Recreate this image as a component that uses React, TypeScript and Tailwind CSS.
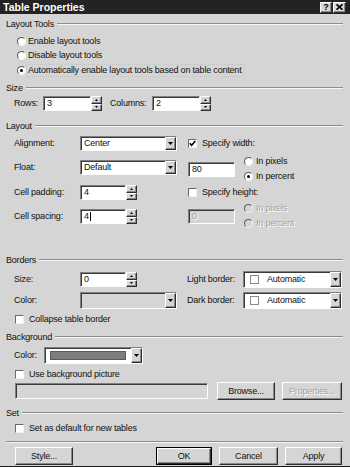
import React from "react";

const sunken =
  "border border-t-[#808080] border-l-[#808080] border-r-white border-b-white shadow-[inset_1px_1px_0_#3a3a3a]";
const raised =
  "border border-t-white border-l-white border-r-[#2e2e2e] border-b-[#2e2e2e] shadow-[inset_-1px_-1px_0_#8a8a8a]";
const dis = "text-[#a2a2a2] [text-shadow:1px_1px_0_#ffffff]";

function Header({ label, className = "" }: { label: string; className?: string }) {
  return (
    <div className={`flex items-center h-[12px] ${className}`}>
      <span className="leading-none">{label}</span>
      <div className="flex-1 ml-[3px] h-[2px] border-t border-t-[#8c8c8c] border-b border-b-[#f6f6f6]" />
    </div>
  );
}

function Radio({ checked = false, disabled = false }: { checked?: boolean; disabled?: boolean }) {
  return (
    <span
      className={`w-[9px] h-[9px] rounded-full border border-t-[#5a5a5a] border-l-[#5a5a5a] border-r-[#f2f2f2] border-b-[#f2f2f2] ${
        disabled ? "bg-[#d5d5d5]" : "bg-white"
      } flex items-center justify-center shrink-0`}
    >
      {checked && <span className="w-[3px] h-[3px] rounded-full bg-black" />}
    </span>
  );
}

function Check({ checked = false }: { checked?: boolean }) {
  return (
    <span className="w-[9px] h-[9px] bg-white border border-t-[#6a6a6a] border-l-[#6a6a6a] border-r-[#f2f2f2] border-b-[#f2f2f2] flex items-center justify-center shrink-0">
      {checked && (
        <svg width="7" height="7" viewBox="0 0 7 7">
          <path d="M0.8 3.2 L2.6 5.2 L6.3 1" stroke="#000" strokeWidth="1.6" fill="none" />
        </svg>
      )}
    </span>
  );
}

function Field({
  value,
  w,
  h = "h-[15px]",
  disabled = false,
  caret = false,
}: {
  value: string;
  w: string;
  h?: string;
  disabled?: boolean;
  caret?: boolean;
}) {
  return (
    <div
      className={`${h} ${w} ${sunken} ${disabled ? "bg-[#d5d5d5]" : "bg-white"} flex items-center pl-[3px] shrink-0`}
    >
      <span className={`leading-none ${disabled ? dis : ""}`}>{value}</span>
      {caret && <span className="w-[1px] h-[9px] bg-black ml-[1px]" />}
    </div>
  );
}

function Tri() {
  return (
    <svg width="5" height="3" viewBox="0 0 5 3">
      <path d="M0 0 L5 0 L2.5 3 Z" fill="#000" />
    </svg>
  );
}

function Spin() {
  return (
    <div className="flex flex-col w-[11px] h-[15px] shrink-0">
      <div className={`flex-1 bg-[#d5d5d5] ${raised} flex items-center justify-center`}>
        <svg width="3" height="2" viewBox="0 0 3 2">
          <path d="M1.5 0 L3 2 L0 2 Z" fill="#000" />
        </svg>
      </div>
      <div className={`flex-1 bg-[#d5d5d5] ${raised} flex items-center justify-center`}>
        <svg width="3" height="2" viewBox="0 0 3 2">
          <path d="M0 0 L3 0 L1.5 2 Z" fill="#000" />
        </svg>
      </div>
    </div>
  );
}

function Select({
  children,
  w,
  h = "h-[15px]",
  disabled = false,
}: {
  children?: React.ReactNode;
  w: string;
  h?: string;
  disabled?: boolean;
}) {
  return (
    <div className={`${h} ${w} ${sunken} ${disabled ? "bg-[#d5d5d5]" : "bg-white"} flex items-stretch shrink-0`}>
      <div className="flex-1 flex items-center pl-[3px] min-w-0">{children}</div>
      <div className={`w-[11px] bg-[#d5d5d5] ${raised} flex items-center justify-center`}>
        <Tri />
      </div>
    </div>
  );
}

function Btn({
  label,
  w = "w-[57px]",
  disabled = false,
  def = false,
}: {
  label: string;
  w?: string;
  disabled?: boolean;
  def?: boolean;
}) {
  const inner = (
    <div className={`h-full w-full bg-[#d5d5d5] ${raised} flex items-center justify-center`}>
      <span className={`leading-none ${disabled ? dis : ""}`}>{label}</span>
    </div>
  );
  if (def) return <div className={`h-[18px] ${w} border border-black shrink-0`}>{inner}</div>;
  return <div className={`h-[18px] ${w} shrink-0`}>{inner}</div>;
}

function RadioRow({
  label,
  checked = false,
  disabled = false,
  className = "",
}: {
  label: string;
  checked?: boolean;
  disabled?: boolean;
  className?: string;
}) {
  return (
    <div className={`flex items-center h-[15px] gap-[3px] ${className}`}>
      <Radio checked={checked} disabled={disabled} />
      <span className={`leading-none ${disabled ? dis : ""}`}>{label}</span>
    </div>
  );
}

function CheckRow({
  label,
  checked = false,
  className = "",
}: {
  label: string;
  checked?: boolean;
  className?: string;
}) {
  return (
    <div className={`flex items-center h-[14px] gap-[5px] ${className}`}>
      <Check checked={checked} />
      <span className="leading-none">{label}</span>
    </div>
  );
}

export default function App() {
  return (
    <div className="w-[350px] h-[467px] bg-[#d5d5d5] overflow-hidden flex flex-col text-[#111] font-['Liberation_Sans',Arial,sans-serif] text-[9px] tracking-[-0.2px]">
      {/* Title bar */}
      <div className="h-[14px] bg-[#232323] flex items-center justify-between pl-[3px] pr-[4px] shrink-0">
        <span className="text-white font-bold text-[10.5px] tracking-normal leading-none">Table Properties</span>
        <div className="flex items-center gap-[1px]">
          <div className={`w-[12px] h-[11px] bg-[#d8d8d8] ${raised} flex items-center justify-center`}>
            <span className="font-bold text-[9px] leading-none text-black">?</span>
          </div>
          <div className={`w-[13px] h-[11px] bg-[#d8d8d8] ${raised} flex items-center justify-center`}>
            <svg width="7" height="6" viewBox="0 0 7 6">
              <path d="M0.5 0.3 L6.5 5.7 M6.5 0.3 L0.5 5.7" stroke="#000" strokeWidth="1.6" />
            </svg>
          </div>
        </div>
      </div>

      <div className="flex flex-col pl-[6px] pr-[7px]">
        <Header label="Layout Tools" className="mt-[4px]" />
        <div className="flex items-center h-[14px] gap-[2px] ml-[11px] mt-[4px]">
          <Radio />
          <span className="leading-none">Enable layout tools</span>
        </div>
        <div className="flex items-center h-[14px] gap-[2px] ml-[11px]">
          <Radio />
          <span className="leading-none">Disable layout tools</span>
        </div>
        <div className="flex items-center h-[14px] gap-[2px] ml-[11px] mt-[1px]">
          <Radio checked />
          <span className="leading-none pr-[2px] outline outline-1 outline-dotted outline-[#c4c4c4] outline-offset-[1px]">
            Automatically enable layout tools based on table content
          </span>
        </div>

        <Header label="Size" className="mt-[5px]" />
        <div className="flex items-center h-[15px] mt-[2px] ml-[8px]">
          <span className="w-[29px] leading-none">Rows:</span>
          <Field value="3" w="w-[48px]" />
          <Spin />
          <span className="w-[42px] ml-[8px] leading-none">Columns:</span>
          <Field value="2" w="w-[48px]" />
          <Spin />
        </div>

        <Header label="Layout" className="mt-[9px]" />
        <div className="flex mt-[4px] h-[95px]">
          <div className="flex flex-col ml-[8px] w-[163px]">
            <div className="flex items-center h-[15px]">
              <span className="w-[66px] leading-none">Alignment:</span>
              <Select w="w-[97px]">
                <span className="leading-none">Center</span>
              </Select>
            </div>
            <div className="flex items-center h-[15px] mt-[9px]">
              <span className="w-[66px] leading-none">Float:</span>
              <Select w="w-[97px]">
                <span className="leading-none">Default</span>
              </Select>
            </div>
            <div className="flex items-center h-[15px] mt-[10px]">
              <span className="w-[66px] leading-none">Cell padding:</span>
              <Field value="4" w="w-[46px]" />
              <Spin />
            </div>
            <div className="flex items-center h-[15px] mt-[9px]">
              <span className="w-[66px] leading-none">Cell spacing:</span>
              <Field value="4" w="w-[46px]" caret />
              <Spin />
            </div>
          </div>
          <div className="flex flex-col ml-[11px]">
            <div className="flex items-center h-[15px] gap-[5px]">
              <Check checked />
              <span className="leading-none">Specify width:</span>
            </div>
            <div className="flex items-center h-[30px] mt-[3px]">
              <Field value="80" w="w-[47px]" />
              <div className="flex flex-col ml-[9px]">
                <RadioRow label="In pixels" />
                <RadioRow label="In percent" checked />
              </div>
            </div>
            <div className="flex items-center h-[15px] gap-[5px] mt-[1px]">
              <Check />
              <span className="leading-none">Specify height:</span>
            </div>
            <div className="flex items-center h-[30px] mt-[1px]">
              <Field value="0" w="w-[47px]" disabled />
              <div className="flex flex-col ml-[9px]">
                <RadioRow label="In pixels" disabled />
                <RadioRow label="In percent" disabled />
              </div>
            </div>
          </div>
        </div>

        <Header label="Borders" className="mt-[23px]" />
        <div className="flex items-center h-[17px] mt-[5px]">
          <div className="flex items-center w-[173px] ml-[8px]">
            <span className="w-[66px] leading-none">Size:</span>
            <Field value="0" w="w-[46px]" />
            <Spin />
          </div>
          <span className="w-[56px] leading-none">Light border:</span>
          <Select w="w-[99px]" h="h-[17px]">
            <span className="w-[9px] h-[9px] bg-white border border-[#8a8a8a] ml-[3px] shrink-0" />
            <span className="leading-none ml-[8px]">Automatic</span>
          </Select>
        </div>
        <div className="flex items-center h-[17px] mt-[4px]">
          <div className="flex items-center w-[173px] ml-[8px]">
            <span className="w-[66px] leading-none">Color:</span>
            <Select w="w-[97px]" h="h-[17px]" disabled />
          </div>
          <span className="w-[56px] leading-none">Dark border:</span>
          <Select w="w-[99px]" h="h-[17px]">
            <span className="w-[9px] h-[9px] bg-white border border-[#8a8a8a] ml-[3px] shrink-0" />
            <span className="leading-none ml-[8px]">Automatic</span>
          </Select>
        </div>
        <CheckRow label="Collapse table border" className="ml-[9px] mt-[3px]" />

        <Header label="Background" className="mt-[5px]" />
        <div className="flex items-center h-[17px] mt-[4px] ml-[8px]">
          <span className="w-[30px] leading-none">Color:</span>
          <Select w="w-[99px]" h="h-[17px]">
            <span className="w-[76px] h-[9px] bg-[#7e7e7e] ml-[2px] border border-[#5a5a5a]" />
          </Select>
        </div>
        <CheckRow label="Use background picture" className="ml-[9px] mt-[3px]" />
        <div className="flex items-center h-[16px] mt-[2px] ml-[9px]">
          <Field value="" w="w-[193px]" h="h-[16px]" disabled />
          <div className="ml-[9px]">
            <Btn label="Browse..." w="w-[58px]" />
          </div>
          <div className="ml-[7px]">
            <Btn label="Properties..." w="w-[60px]" disabled />
          </div>
        </div>

        <Header label="Set" className="mt-[8px]" />
        <CheckRow label="Set as default for new tables" className="ml-[9px] mt-[2px]" />
        <div className="mt-[6px] h-[2px] border-t border-t-[#8c8c8c] border-b border-b-[#f6f6f6]" />
        <div className="flex items-center h-[18px] mt-[4px] ml-[9px]">
          <Btn label="Style..." w="w-[58px]" />
          <div className="flex-1" />
          <div className="flex items-center gap-[7px] mr-[1px]">
            <Btn label="OK" w="w-[56px]" def />
            <Btn label="Cancel" w="w-[59px]" />
            <Btn label="Apply" w="w-[57px]" />
          </div>
        </div>
      </div>
      <div className="mt-auto h-[1px] bg-[#1a1a1a]" />
    </div>
  );
}
